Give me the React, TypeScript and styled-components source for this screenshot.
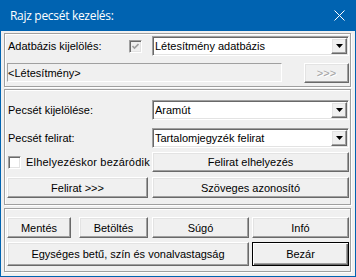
import React from "react";
import styled, { createGlobalStyle, css } from "styled-components";

const GlobalStyle = createGlobalStyle`
  html, body { margin: 0; padding: 0; background: #ffffff; }
  body { font-family: "Liberation Sans", Arial, sans-serif; font-size: 11px; color: #000; }
  * { box-sizing: border-box; }
`;

const Window = styled.div`
  width: 356px;
  height: 277px;
  background: #f0f0f0;
  border: 1px solid #0063b1;
  border-top: 0;
  display: flex;
  flex-direction: column;
`;

const TitleBar = styled.div`
  height: 31px;
  margin: 0 -1px;
  background: #0063b1;
  color: #ffffff;
  display: flex;
  align-items: center;
  padding: 0 10px 0 10px;
  font-family: "Open Sans", "Noto Sans", sans-serif;
  font-size: 12px;
`;

const TitleText = styled.span`
  flex: 1;
  letter-spacing: -0.3px;
`;

const CloseIcon = styled.svg`
  width: 11px;
  height: 11px;
  margin-right: 1px;
`;

const Body = styled.div`
  display: flex;
  flex-direction: column;
  padding: 2px 4px 0 3px;
`;

const Group = styled.div<{ $pt: number; $pb: number; $mt?: number }>`
  margin-top: ${(p) => p.$mt ?? 0}px;
  border: 1px solid #a0a0a0;
  box-shadow: inset 1px 1px 0 #ffffff, 1px 1px 0 #ffffff;
  padding: ${(p) => p.$pt}px 1px ${(p) => p.$pb}px 2px;
  display: flex;
  flex-direction: column;
`;

const FormRow = styled.div<{ $h: number; $mt?: number }>`
  display: grid;
  grid-template-columns: 141px 197px;
  column-gap: 4px;
  height: ${(p) => p.$h}px;
  margin-top: ${(p) => p.$mt ?? 0}px;
`;

const PathRow = styled.div<{ $mt?: number }>`
  display: flex;
  justify-content: space-between;
  align-items: flex-start;
  height: 20px;
  margin-top: ${(p) => p.$mt ?? 0}px;
`;

const ButtonRow = styled.div<{ $h: number; $mt?: number }>`
  display: flex;
  height: ${(p) => p.$h}px;
  margin-top: ${(p) => p.$mt ?? 0}px;
`;

const LabelCell = styled.div`
  display: flex;
  align-items: center;
  justify-content: space-between;
  padding: 0 6px 0 1px;
`;

const CheckCell = styled.label`
  display: flex;
  align-items: center;
  gap: 5px;
  padding-left: 1px;
`;

const Label = styled.span<{ $spread?: boolean }>`
  white-space: nowrap;
  letter-spacing: ${(p) => (p.$spread ? "0.2px" : "0")};
`;

const sunken = css`
  border: 1px solid;
  border-color: #a0a0a0 #ffffff #ffffff #a0a0a0;
  box-shadow: inset 1px 1px 0 #696969, inset -1px -1px 0 #e3e3e3;
`;

const raised = css`
  border: 1px solid;
  border-color: #ffffff #696969 #696969 #ffffff;
  box-shadow: inset -1px -1px 0 #a0a0a0, inset 1px 1px 0 #e3e3e3;
`;

const CheckBoxBox = styled.span<{ $disabled?: boolean }>`
  width: 13px;
  height: 13px;
  flex: 0 0 13px;
  ${sunken};
  background: ${(p) => (p.$disabled ? "#f0f0f0" : "#ffffff")};
  display: flex;
  align-items: center;
  justify-content: center;
`;

const ComboBox = styled.div`
  height: 20px;
  ${sunken};
  background: #ffffff;
  display: flex;
  align-items: center;
  padding: 1px 1px 1px 2px;
`;

const ComboText = styled.span`
  flex: 1;
  white-space: nowrap;
  overflow: hidden;
`;

const ArrowButton = styled.span`
  width: 16px;
  height: 16px;
  ${raised};
  background: #f0f0f0;
  display: flex;
  align-items: center;
  justify-content: center;
`;

const SunkenField = styled.div`
  width: 275px;
  height: 19px;
  border: 1px solid;
  border-color: #a0a0a0 #ffffff #ffffff #a0a0a0;
  display: flex;
  align-items: center;
  padding-left: 0;
`;

const Button = styled.button<{ $w?: number; $ml?: number; $default?: boolean }>`
  width: ${(p) => (p.$w ? `${p.$w}px` : "100%")};
  height: 100%;
  margin: 0 0 0 ${(p) => p.$ml ?? 0}px;
  padding: 0;
  font-family: "Liberation Sans", Arial, sans-serif;
  font-size: 11px;
  color: #000;
  background: #f0f0f0;
  ${raised};
  ${(p) =>
    p.$default &&
    css`
      border: 1px solid #000000;
      box-shadow: inset 1px 1px 0 #ffffff, inset -1px -1px 0 #696969,
        inset -2px -2px 0 #a0a0a0;
    `}
  &:disabled {
    color: #a0a0a0;
    text-shadow: 1px 1px 0 #ffffff;
  }
`;

const Arrow = () => (
  <svg width="7" height="4" viewBox="0 0 7 4">
    <polygon points="0,0 7,0 3.5,4" fill="#000" />
  </svg>
);

const CheckBox = ({ checked, disabled }: { checked?: boolean; disabled?: boolean }) => (
  <CheckBoxBox $disabled={disabled}>
    {checked && (
      <svg width="7" height="7" viewBox="0 0 7 7">
        <path d="M0.5 3 L2.5 5 L6.5 1" stroke={disabled ? "#a0a0a0" : "#000"} strokeWidth="1.6" fill="none" />
      </svg>
    )}
  </CheckBoxBox>
);

const Combo = ({ value }: { value: string }) => (
  <ComboBox>
    <ComboText>{value}</ComboText>
    <ArrowButton>
      <Arrow />
    </ArrowButton>
  </ComboBox>
);

export default function App() {
  return (
    <>
      <GlobalStyle />
      <Window>
        <TitleBar>
          <TitleText>Rajz pecsét kezelés:</TitleText>
          <CloseIcon viewBox="0 0 11 11">
            <path d="M0.5 0.5 L10.5 10.5 M10.5 0.5 L0.5 10.5" stroke="#fff" strokeWidth="1" />
          </CloseIcon>
        </TitleBar>
        <Body>
          <Group $pt={2} $pb={3}>
            <FormRow $h={20}>
              <LabelCell>
                <Label>Adatbázis kijelölés:</Label>
                <CheckBox checked disabled />
              </LabelCell>
              <Combo value="Létesítmény adatbázis" />
            </FormRow>
            <PathRow $mt={7}>
              <SunkenField>&lt;Létesítmény&gt;</SunkenField>
              <Button $w={45} disabled>
                &gt;&gt;&gt;
              </Button>
            </PathRow>
          </Group>

          <Group $pt={10} $pb={6} $mt={2}>
            <FormRow $h={20}>
              <LabelCell>
                <Label>Pecsét kijelölése:</Label>
              </LabelCell>
              <Combo value="Aramút" />
            </FormRow>
            <FormRow $h={20} $mt={8}>
              <LabelCell>
                <Label>Pecsét felirat:</Label>
              </LabelCell>
              <Combo value="Tartalomjegyzék felirat" />
            </FormRow>
            <FormRow $h={20} $mt={4}>
              <CheckCell>
                <CheckBox />
                <Label $spread>Elhelyezéskor bezáródik</Label>
              </CheckCell>
              <Button>Felirat elhelyezés</Button>
            </FormRow>
            <FormRow $h={21} $mt={5}>
              <Button>Felirat &gt;&gt;&gt;</Button>
              <Button>Szöveges azonosító</Button>
            </FormRow>
          </Group>

          <Group $pt={8} $pb={5} $mt={3}>
            <ButtonRow $h={21}>
              <Button $w={64}>Mentés</Button>
              <Button $w={69} $ml={8}>Betöltés</Button>
              <Button $w={97} $ml={4}>Súgó</Button>
              <Button $w={97} $ml={3}>Infó</Button>
            </ButtonRow>
            <ButtonRow $h={24} $mt={4}>
              <Button $w={242}>Egységes betű, szín és vonalvastagság</Button>
              <Button $w={97} $ml={3} $default>
                Bezár
              </Button>
            </ButtonRow>
          </Group>
        </Body>
      </Window>
    </>
  );
}
